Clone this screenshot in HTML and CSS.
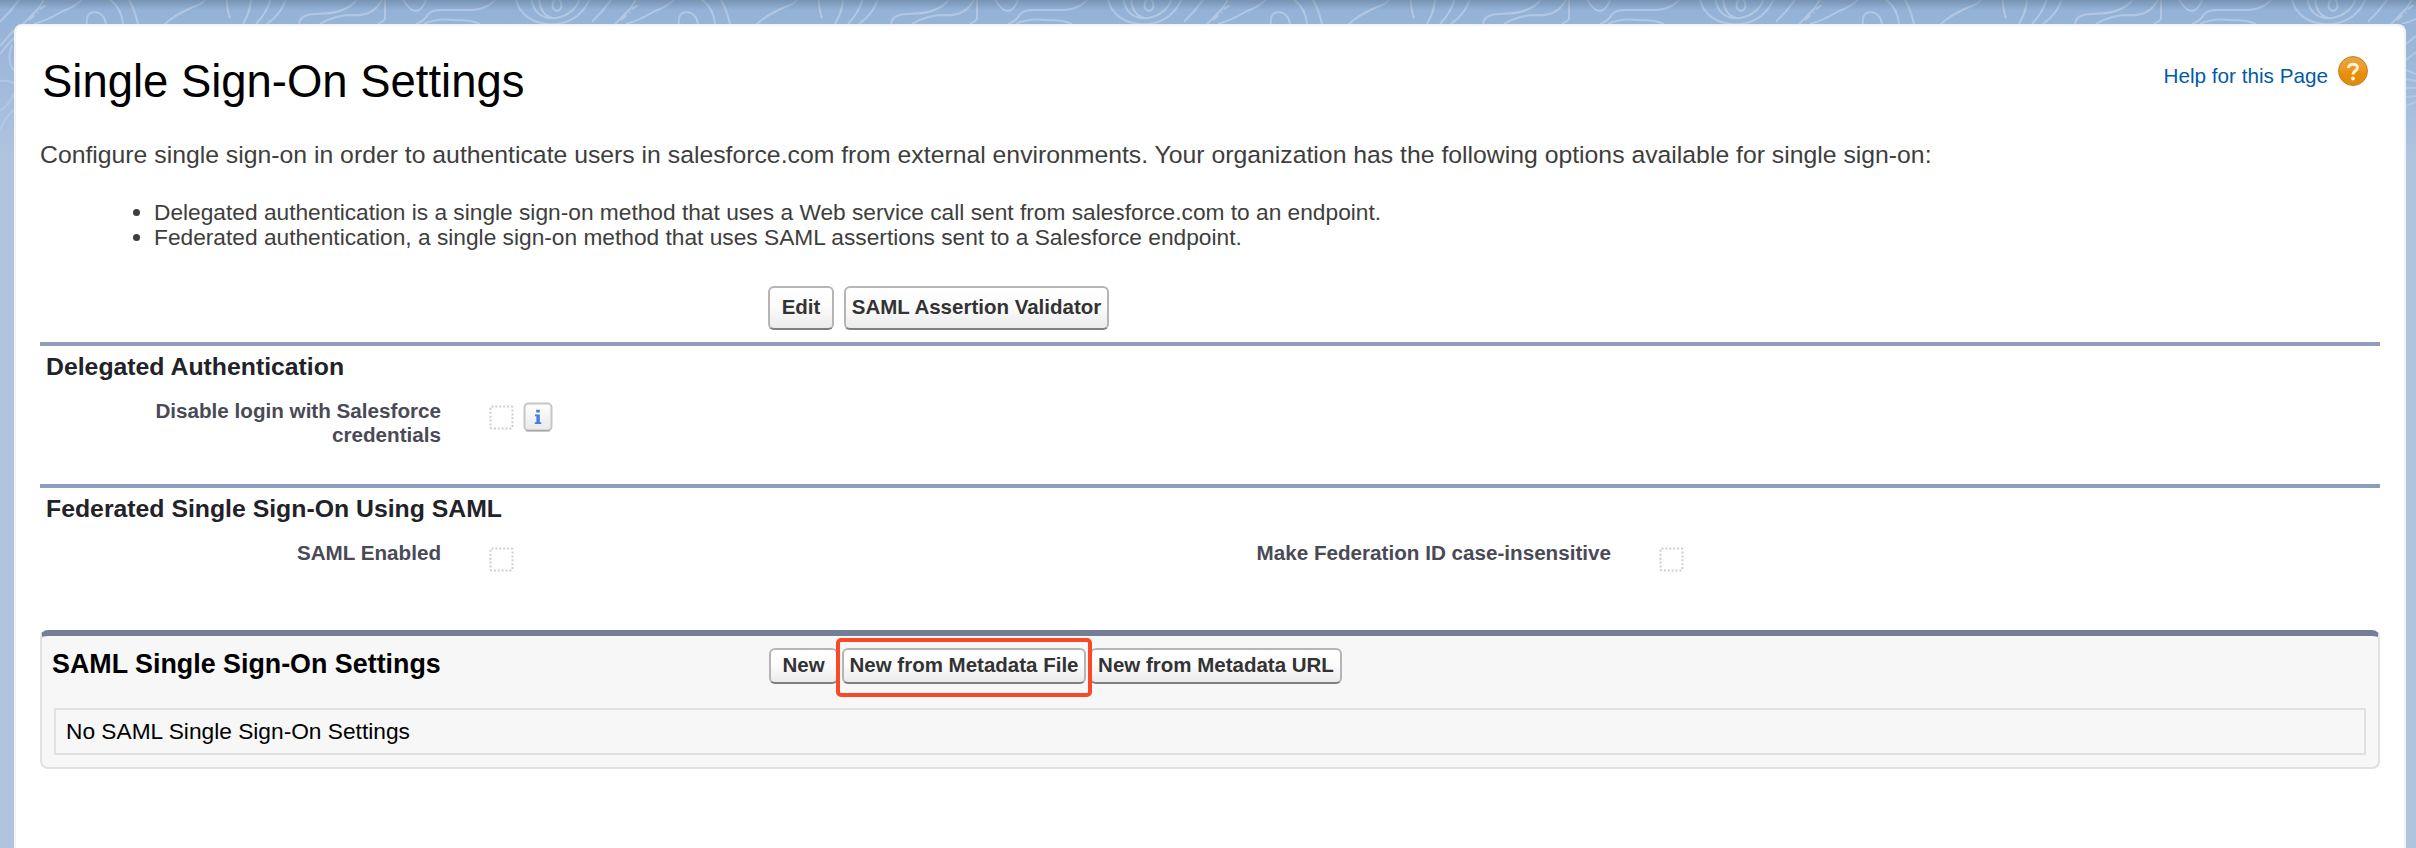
FILE: index.html
```html
<!DOCTYPE html>
<html lang="en">
<head>
<meta charset="utf-8">
<title>Single Sign-On Settings</title>
<link rel="stylesheet" href="styles.css">
</head>
<body>
<svg class="backdrop" width="2416" height="160" aria-hidden="true">
  <defs>
    <pattern id="contours" width="592" height="160" patternUnits="userSpaceOnUse">
      <g fill="none" stroke="#b3c7e3" stroke-width="2">
        <path d="M-8 28Q10 14 20 -2M5 43L38 9L45 -2M4 52Q14 34 36 24"/>
        <path d="M29 20L38 12M40 9L49 3M29 20L33 16" stroke-dasharray="7 4"/>
        <path d="M34 24Q48 20 63 11Q77 6 83 -2"/>
        <path d="M87 24C84 8 104 8 106 24M108 -2Q122 8 123 24M128 -2Q135 10 138 24"/>
        <path d="M164 25Q174 15 193 7Q203 4 206 -2M227 -2Q226 8 230 18"/>
        <path d="M243 24Q251 10 251 -2M256 24Q268 11 271 -2M267 24Q283 12 286 -2"/>
        <path d="M299 24C301 8 325 18 342 10Q355 5 357 -2M320 24Q335 15 352 15Q374 17 383 -2M385 -2V19Q383 22 378 24"/>
        <path d="M402 -2Q417 24 427 -2M416 24C430 20 424 10 440 10H473Q488 9 497 -2M424 24Q435 18 454 20Q473 20 480 24"/>
        <path d="M516 -2C520 30 576 36 590 -2M532 -2C532 26 572 24 580 -2M539 -2Q540 16 553 18"/>
        <ellipse cx="557" cy="5" rx="4.5" ry="6"/>
      </g>
    </pattern>
    <linearGradient id="sky" x1="0" y1="0" x2="0" y2="1">
      <stop offset="0" stop-color="#92b1d6"/>
      <stop offset=".25" stop-color="#99b5d9"/>
      <stop offset="1" stop-color="#b0c4df"/>
    </linearGradient>
    <linearGradient id="shade" x1="0" y1="0" x2="0" y2="1">
      <stop offset="0" stop-color="#5d7690" stop-opacity=".5"/>
      <stop offset="1" stop-color="#5d7690" stop-opacity="0"/>
    </linearGradient>
  </defs>
  <rect width="2416" height="160" fill="url(#sky)"/>
  <rect width="2416" height="24" fill="url(#contours)"/>
  <g fill="none" stroke="#b3c7e3" stroke-width="2">
    <path d="M0 46L14 30M0 54Q8 44 14 38M12 45Q6 60 14 71M0 81Q8 80 14 83M0 111Q8 106 14 94M0 130Q6 116 14 110"/>
    <path d="M2406 44L2416 36M2406 60L2416 52M2406 70L2416 74M2406 79L2416 81M2406 88L2416 88M2406 97L2416 96M2406 106L2416 102"/>
  </g>
  <rect width="2416" height="10" fill="url(#shade)"/>
</svg>
<main class="card">
  <header class="page-head">
    <h1 class="page-title">Single Sign-On Settings</h1>
    <a class="help">Help for this Page
      <svg class="help-icon" viewBox="0 0 30 30" width="30" height="30">
        <defs><linearGradient id="orb" x1="0" y1="0" x2="0" y2="1">
          <stop offset="0" stop-color="#e9a640"/><stop offset=".4" stop-color="#eb9a26"/><stop offset=".6" stop-color="#e98e05"/><stop offset="1" stop-color="#dd8d10"/>
        </linearGradient></defs>
        <circle cx="15" cy="15" r="14.5" fill="url(#orb)" stroke="#c08335"/>
        <path d="M10.5 12C10.5 7 19.5 7 19.5 11.5C19.5 15 15 14.5 15 18.5" fill="none" stroke="#fff3dc" stroke-width="3"/>
        <circle cx="15" cy="22.5" r="1.9" fill="#fff3dc"/>
      </svg>
    </a>
  </header>
  <p class="intro">Configure single sign-on in order to authenticate users in salesforce.com from external environments. Your organization has the following options available for single sign-on:</p>
  <ul class="options">
    <li>Delegated authentication is a single sign-on method that uses a Web service call sent from salesforce.com to an endpoint.</li>
    <li>Federated authentication, a single sign-on method that uses SAML assertions sent to a Salesforce endpoint.</li>
  </ul>
  <div class="actions">
    <button class="btn btn-edit">Edit</button>
    <button class="btn btn-validator">SAML Assertion Validator</button>
  </div>
  <section class="section">
    <h2 class="section-title">Delegated Authentication</h2>
    <div class="fields">
      <span class="label">Disable login with Salesforce credentials</span>
      <span class="value">
        <svg class="check" viewBox="0 0 25 25" width="25" height="25"><rect x="1.5" y="1.5" width="22" height="22" rx="1"/></svg>
        <svg class="info" viewBox="0 0 30 30" width="30" height="30">
          <defs><linearGradient id="key" x1="0" y1="0" x2="0" y2="1"><stop offset="0" stop-color="#fff"/><stop offset="1" stop-color="#e9e9ec"/></linearGradient></defs>
          <rect x="1.5" y="1.5" width="27" height="27" rx="4" fill="url(#key)" stroke="#c6c6c6" stroke-width="2"/>
          <path d="M3 28.7H27" stroke="#a9a9a9" stroke-width="1.5"/>
          <path d="M13.2 7.8H16.8V10.5H13.2ZM12 12.5H16.8V20.2H18.3V22H11.8V20.2H13.4V14.2H12Z" fill="#3b82dc"/>
        </svg>
      </span>
    </div>
  </section>
  <section class="section section-saml">
    <h2 class="section-title">Federated Single Sign-On Using SAML</h2>
    <div class="fields">
      <span class="label">SAML Enabled</span>
      <span class="value"><svg class="check" viewBox="0 0 25 25" width="25" height="25"><rect x="1.5" y="1.5" width="22" height="22" rx="1"/></svg></span>
      <span class="label label-wide">Make Federation ID case-insensitive</span>
      <span class="value"><svg class="check" viewBox="0 0 25 25" width="25" height="25"><rect x="1.5" y="1.5" width="22" height="22" rx="1"/></svg></span>
    </div>
  </section>
  <section class="related">
    <div class="related-head">
      <h3 class="related-title">SAML Single Sign-On Settings</h3>
      <div class="related-actions">
        <button class="btn btn-new">New</button>
        <span class="marked"><button class="btn btn-file">New from Metadata File</button></span>
        <button class="btn btn-url">New from Metadata URL</button>
      </div>
    </div>
    <div class="empty">No SAML Single Sign-On Settings</div>
  </section>
</main>
</body>
</html>
```

FILE: styles.css
```css
*, *::after { box-sizing: border-box; }
body {
  margin: 0;
  height: 848px;
  padding: 24px 10px 0 14px;
  overflow: hidden;
  background: #b0c4df;
  font-family: "Liberation Sans", Arial, sans-serif;
  font-size: 22.72px;
  color: #3e3e3c;
}
/* decorative contour map under the card */
.backdrop { position: absolute; left: 0; top: 0; z-index: -1; }
.card {
  height: 824px;
  padding: 28px 24px 0;
  background: #fff;
  border: 2px solid #f2f3f4;
  border-bottom: 0;
  border-radius: 8px 8px 0 0;
}
h1, h2, h3, p, ul { margin: 0; }
.page-head { display: flex; justify-content: space-between; align-items: flex-start; height: 86px; padding: 1px 12px 0 2px; }
.page-title { padding-top: 1px; font-size: 45.45px; line-height: 52px; font-weight: 400; color: #000; }
.help { display: flex; gap: 10px; margin-top: 1px; font-size: 20.7px; line-height: 40px; color: #015ba7; }
.intro { font-size: 24.78px; line-height: 29px; white-space: nowrap; }
.options { margin-top: 31px; padding-left: 114px; line-height: 25px; }
.actions { display: flex; gap: 10px; margin: 36px 0 12px 728px; }
.btn {
  height: 44px;
  padding: 0 0 2px;
  font: bold 20.5px/38px "Liberation Sans", Arial, sans-serif;
  color: #333;
  text-align: center;
  white-space: nowrap;
  background: linear-gradient(#fff, #fcfcfc 45%, #ebebeb);
  border: 2px solid #b5b5b5;
  border-bottom-color: #7f7f7f;
  border-radius: 6px;
}
.btn-edit { width: 66px; }
.btn-validator { width: 265px; }
.section { height: 142px; padding-top: 5px; border-top: 4px solid #8e9dbe; }
.section-saml { height: 146px; }
.section-title { padding-left: 6px; font-size: 24.8px; line-height: 32px; color: #222228; }
.fields { display: grid; grid-template-columns: 401px 769px 401px 1fr; margin-top: 16px; }
.label { padding-left: 90px; text-align: right; font-size: 20.65px; font-weight: bold; line-height: 24px; color: #4a4a56; }
.label-wide { padding-left: 0; }
.value { display: flex; align-items: flex-start; gap: 9px; padding-left: 48px; padding-top: 3px; }
.check { margin-top: 3px; fill: none; stroke: #cfcfcf; stroke-width: 2; stroke-dasharray: 2 1.9; }
.related {
  height: 139px;
  padding: 0 12px;
  background: #f7f7f7;
  border: 2px solid #e1e1e1;
  border-top: 6px solid #747e96;
  border-radius: 8px;
}
.related-head { display: flex; height: 72px; }
.related-title { width: 715px; margin-left: -2px; padding-top: 11px; font-size: 26.85px; line-height: 34px; color: #000; }
.related-actions { display: flex; align-items: flex-start; gap: 4px; margin-left: 2px; padding-top: 12px; }
.related-actions .btn { height: 36px; line-height: 30px; }
.btn-new { width: 69px; }
.btn-file { width: 244px; display: block; }
.btn-url { width: 252px; }
.marked { position: relative; }
/* highlight frame over the button row */
.marked::after {
  content: "";
  position: absolute;
  left: -6px;
  top: -10px;
  width: 256px;
  height: 59px;
  border: 4px solid #fa4928;
  border-radius: 5px;
}
.empty { height: 47px; padding-left: 10px; border: 2px solid #e1e1e1; line-height: 42px; color: #000; }
```
